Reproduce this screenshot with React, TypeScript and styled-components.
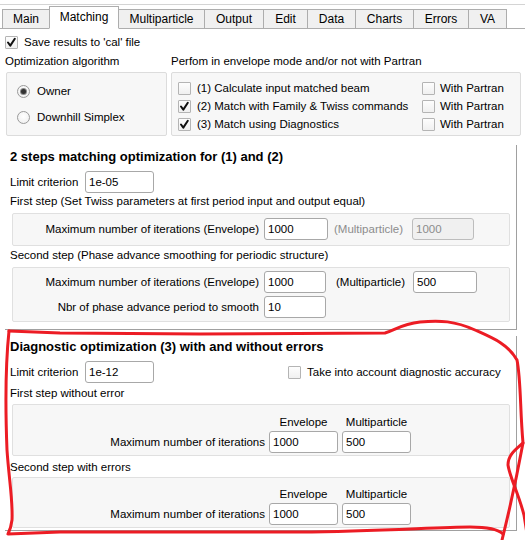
import React from 'react';
import styled, { createGlobalStyle } from 'styled-components';

const Global = createGlobalStyle`
  html, body { margin: 0; padding: 0; background: #fff; }
  body { font-family: "Liberation Sans", Arial, sans-serif; font-size: 11.5px; color: #000; }
  * { box-sizing: border-box; }
`;

const Frame = styled.div`
  position: relative;
  width: 525px;
  height: 540px;
  overflow: hidden;
  background: #fff;
  display: flex;
  flex-direction: column;
`;

const TabBar = styled.div`
  margin-top: 4px;
  border-top: 1px solid #d4d4d4;
  height: 25px;
  display: flex;
  align-items: flex-end;
  padding-left: 2px;
  border-bottom: 1px solid #adadad;
`;

const Tab = styled.div<{ $w: number; $active?: boolean }>`
  width: ${p => p.$w}px;
  height: ${p => (p.$active ? 23 : 20)}px;
  margin-bottom: -1px;
  margin-right: -1px;
  background: ${p => (p.$active ? '#fff' : '#f0f0f0')};
  border: 1px solid #adadad;
  border-bottom: 1px solid ${p => (p.$active ? '#fff' : '#adadad')};
  display: flex;
  align-items: ${p => (p.$active ? 'flex-start' : 'center')};
  padding-top: ${p => (p.$active ? '3px' : '0')};
  justify-content: center;
  position: relative;
  z-index: ${p => (p.$active ? 2 : 1)};
  line-height: 14px;
  font-size: 12px;
`;

const Row = styled.div<{ $mt?: number; $ml?: number }>`
  display: flex;
  align-items: center;
  margin-top: ${p => p.$mt ?? 0}px;
  margin-left: ${p => p.$ml ?? 0}px;
  height: 14px;
  line-height: 14px;
  white-space: nowrap;
`;

const Box = styled.span<{ $gap?: number }>`
  width: 13px;
  height: 13px;
  flex: none;
  border: 1px solid #b4b4b4;
  border-radius: 1px;
  background: linear-gradient(#fdfdfd, #f0f0f0);
  margin-right: ${p => p.$gap ?? 6}px;
  display: flex;
  align-items: center;
  justify-content: center;
`;

const Check = ({ checked, gap }: { checked?: boolean; gap?: number }) => (
  <Box $gap={gap}>
    {checked && (
      <svg width="11" height="11" viewBox="0 0 11 11">
        <path d="M2 5.5 L4.3 8.6 L8.8 1.8" fill="none" stroke="#111" strokeWidth="2" strokeLinecap="round" strokeLinejoin="round" />
      </svg>
    )}
  </Box>
);

const RadioCircle = styled.span`
  width: 13px;
  height: 13px;
  flex: none;
  border-radius: 50%;
  border: 1px solid #9a9a9a;
  background: radial-gradient(circle at 50% 40%, #ffffff, #ececec);
  margin-right: 7px;
  display: flex;
  align-items: center;
  justify-content: center;
`;

const Dot = styled.span`
  width: 5px;
  height: 5px;
  border-radius: 50%;
  background: #333;
  box-shadow: 0 0 0 1px #8a8a8a;
`;

const LabelsRow = styled.div`
  display: flex;
  margin-top: 5px;
  height: 14px;
  line-height: 14px;
  white-space: nowrap;
`;

const LabelCell = styled.div<{ $w?: number; $ml?: number }>`
  width: ${p => (p.$w ? `${p.$w}px` : 'auto')};
  margin-left: ${p => p.$ml ?? 0}px;
`;

const GroupRow = styled.div`
  display: flex;
  margin-top: 4px;
  margin-left: 6px;
  gap: 4px;
  height: 64px;
`;

const GroupBox = styled.div<{ $w: number }>`
  width: ${p => p.$w}px;
  height: 64px;
  background: #f7f7f7;
  border: 1px solid #dcdcdc;
  border-radius: 2px;
`;

const RadioList = styled.div`
  display: flex;
  flex-direction: column;
  gap: 12px;
  padding: 11px 0 0 10px;
`;

const CheckGrid = styled.div`
  display: grid;
  grid-template-columns: 244px auto;
  row-gap: 4px;
  padding: 8px 0 0 6px;
`;

const Section = styled.div<{ $mt: number; $pb: number }>`
  margin-top: ${p => p.$mt}px;
  margin-left: 5px;
  width: 512px;
  border-right: 1px solid #a0a0a0;
  border-bottom: 1px solid #a0a0a0;
  background: #fff;
  padding: 0 0 ${p => p.$pb}px 5px;
  display: flex;
  flex-direction: column;
`;

const Title = styled.div<{ $mt: number }>`
  margin-top: ${p => p.$mt}px;
  font-weight: bold;
  font-size: 13px;
  height: 14px;
  line-height: 14px;
  white-space: nowrap;
`;

const Line = styled.div<{ $mt: number }>`
  margin-top: ${p => p.$mt}px;
  height: 14px;
  line-height: 14px;
  white-space: nowrap;
`;

const InputRow = styled.div<{ $mt: number }>`
  margin-top: ${p => p.$mt}px;
  display: flex;
  align-items: center;
  white-space: nowrap;
`;

const Field = styled.div<{ $w: number; $h?: number; $disabled?: boolean }>`
  width: ${p => p.$w}px;
  height: ${p => p.$h ?? 22}px;
  flex: none;
  border: 1px solid ${p => (p.$disabled ? '#bdbdbd' : '#a8a8a8')};
  border-radius: 3px;
  background: ${p => (p.$disabled ? '#f0f0f0' : '#fff')};
  color: ${p => (p.$disabled ? '#8c8c8c' : '#000')};
  padding-left: 3px;
  display: flex;
  align-items: center;
`;

const Panel = styled.div<{ $mt: number; $pad: string }>`
  margin-top: ${p => p.$mt}px;
  margin-left: 2px;
  width: 498px;
  background: #f7f7f7;
  border: 1px solid #e0e0e0;
  border-radius: 2px;
  padding: ${p => p.$pad};
  display: flex;
  flex-direction: column;
  gap: 3px;
`;

const PanelRow = styled.div`
  display: flex;
  align-items: center;
  white-space: nowrap;
`;

const RightLabel = styled.div<{ $w: number }>`
  width: ${p => p.$w}px;
  text-align: right;
  flex: none;
`;

const SideText = styled.div<{ $ml: number; $w: number; $muted?: boolean }>`
  margin-left: ${p => p.$ml}px;
  width: ${p => p.$w}px;
  flex: none;
  color: ${p => (p.$muted ? '#8c8c8c' : '#000')};
`;

const ColGrid = styled.div`
  display: grid;
  grid-template-columns: 252px 69px 69px;
  column-gap: 4px;
  row-gap: 2px;
  align-items: center;
  white-space: nowrap;
`;

const ColHead = styled.div`
  text-align: center;
  height: 14px;
  line-height: 14px;
`;

const Overlay = styled.svg`
  position: absolute;
  left: 0;
  top: 0;
  pointer-events: none;
`;

const tabs: [string, number][] = [
  ['Main', 48],
  ['Matching', 70],
  ['Multiparticle', 87],
  ['Output', 60],
  ['Edit', 45],
  ['Data', 49],
  ['Charts', 59],
  ['Errors', 56],
  ['VA', 39],
];

export default function App() {
  return (
    <Frame>
      <Global />
      <TabBar>
        {tabs.map(([t, w]) => (
          <Tab key={t} $w={w} $active={t === 'Matching'}>
            {t}
          </Tab>
        ))}
      </TabBar>

      <Row $mt={6} $ml={5}>
        <Check checked />
        Save results to 'cal' file
      </Row>

      <LabelsRow>
        <LabelCell $w={166} $ml={5}>Optimization algorithm</LabelCell>
        <LabelCell>Perfom in envelope mode and/or not with Partran</LabelCell>
      </LabelsRow>

      <GroupRow>
        <GroupBox $w={161}>
          <RadioList>
            <Row>
              <RadioCircle><Dot /></RadioCircle>
              Owner
            </Row>
            <Row>
              <RadioCircle />
              Downhill Simplex
            </Row>
          </RadioList>
        </GroupBox>
        <GroupBox $w={350}>
          <CheckGrid>
            <Row><Check />(1) Calculate input matched beam</Row>
            <Row><Check gap={5} />With Partran</Row>
            <Row><Check checked />(2) Match with Family &amp; Twiss commands</Row>
            <Row><Check gap={5} />With Partran</Row>
            <Row><Check checked />(3) Match using Diagnostics</Row>
            <Row><Check gap={5} />With Partran</Row>
          </CheckGrid>
        </GroupBox>
      </GroupRow>

      <Section $mt={9} $pb={7}>
        <Title $mt={5}>2 steps matching optimization for (1) and (2)</Title>
        <InputRow $mt={7}>
          <SideText $ml={0} $w={75}>Limit criterion</SideText>
          <Field $w={69}>1e-05</Field>
        </InputRow>
        <Line $mt={1}>First step (Set Twiss parameters at first period input and output equal)</Line>
        <Panel $mt={5} $pad="4px 0 5px 0">
          <PanelRow>
            <RightLabel $w={246}>Maximum number of iterations (Envelope)</RightLabel>
            <Field $w={64} style={{ marginLeft: 5 }}>1000</Field>
            <SideText $ml={6} $w={78} $muted>(Multiparticle)</SideText>
            <Field $w={62} $disabled>1000</Field>
          </PanelRow>
        </Panel>
        <Line $mt={2}>Second step (Phase advance smoothing for periodic structure)</Line>
        <Panel $mt={5} $pad="3px 0 3px 0">
          <PanelRow>
            <RightLabel $w={246}>Maximum number of iterations (Envelope)</RightLabel>
            <Field $w={62} style={{ marginLeft: 5 }}>1000</Field>
            <SideText $ml={10} $w={77}>(Multiparticle)</SideText>
            <Field $w={64}>500</Field>
          </PanelRow>
          <PanelRow>
            <RightLabel $w={246}>Nbr of phase advance period to smooth</RightLabel>
            <Field $w={62} style={{ marginLeft: 5 }}>10</Field>
          </PanelRow>
        </Panel>
      </Section>

      <Section $mt={6} $pb={2}>
        <Title $mt={4}>Diagnostic optimization (3) with and without errors</Title>
        <InputRow $mt={7}>
          <SideText $ml={0} $w={75}>Limit criterion</SideText>
          <Field $w={69}>1e-12</Field>
          <Row $ml={134}>
            <Check />
            Take into account diagnostic accuracy
          </Row>
        </InputRow>
        <Line $mt={3}>First step without error</Line>
        <Panel $mt={4} $pad="10px 0 2px 0">
          <ColGrid>
            <span />
            <ColHead>Envelope</ColHead>
            <ColHead>Multiparticle</ColHead>
            <RightLabel $w={252}>Maximum number of iterations</RightLabel>
            <Field $w={69}>1000</Field>
            <Field $w={69}>500</Field>
          </ColGrid>
        </Panel>
        <Line $mt={4}>Second step with errors</Line>
        <Panel $mt={3} $pad="9px 0 2px 0">
          <ColGrid>
            <span />
            <ColHead>Envelope</ColHead>
            <ColHead>Multiparticle</ColHead>
            <RightLabel $w={252}>Maximum number of iterations</RightLabel>
            <Field $w={69}>1000</Field>
            <Field $w={69}>500</Field>
          </ColGrid>
        </Panel>
      </Section>

      <Overlay width="525" height="540" viewBox="0 0 525 540">
        <g fill="none" stroke="#ec1c24" strokeWidth="3" strokeLinecap="round" strokeLinejoin="round">
          <path d="M9 331 L60 333 L200 334 L385 333 C395 330 402 324 420 322 C440 320 455 321 475 330 C493 338 508 344 517 360 C521 380 520 410 523 443 C515 450 508 455 508 465 C510 478 518 492 524 515 L528 540" />
          <path d="M523 443 C518 470 512 500 502 540" />
          <path d="M9 331 C6 360 5 400 7 450 C9 480 13 500 12 520 C11 528 9 532 8 534 L60 532 L300 532 C380 531 440 527 470 527 C488 527 498 529 503 534" />
        </g>
      </Overlay>
    </Frame>
  );
}
